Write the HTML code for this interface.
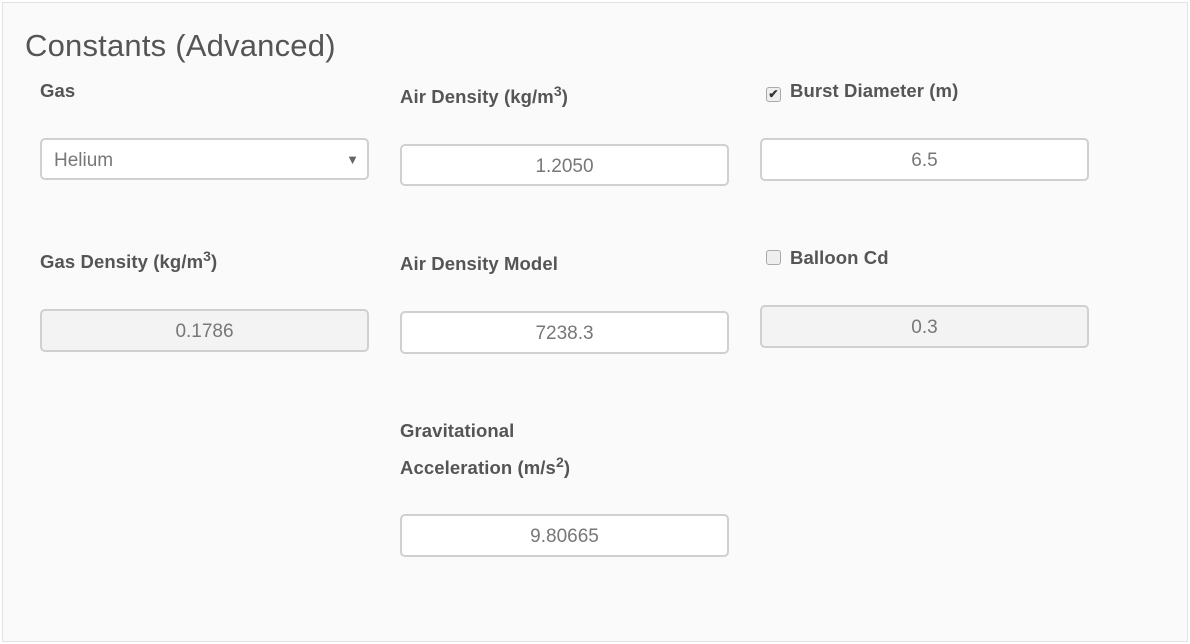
<!DOCTYPE html>
<html><head><style>
body{margin:0;width:1190px;height:644px;background:#fff;font-family:"Liberation Sans",Arial,sans-serif;position:relative;overflow:hidden}
.panel{position:absolute;left:2px;top:2px;width:1184px;height:638px;border:1px solid #e3e3e3;background:#fafafa}
.t{position:absolute;left:25px;top:28px;font-size:31px;color:#555;line-height:36px;letter-spacing:0.2px}
.l{position:absolute;font-weight:bold;font-size:18.5px;color:#555;line-height:22px;white-space:nowrap;letter-spacing:0.1px}
.l sup{font-size:14px;line-height:0}
.b{position:absolute;width:325px;height:38px;border:2px solid #d0d0d0;border-radius:5px;background:#fff;color:#777;font-size:19px;line-height:42px;text-align:center;box-sizing:content-box}
.g{background:#f3f3f3}
.cb{display:inline-block;width:13px;height:13px;border:1px solid #aaa;border-radius:3px;background:#eee;vertical-align:-1px;margin-right:9px;position:relative;font-size:12px;line-height:13px;text-align:center;color:#333}
</style></head><body>
<div class="panel"></div>
<div class="t">Constants (Advanced)</div>
<div class="l" style="left:40px;top:80px">Gas</div>
<div class="b" style="left:40px;top:138px;text-align:left;text-indent:12px">Helium<span style="position:absolute;right:8px;top:-1px;font-size:13px;color:#666">▼</span></div>
<div class="l" style="left:400px;top:86px">Air Density (kg/m<sup>3</sup>)</div>
<div class="b" style="left:400px;top:144px">1.2050</div>
<div class="l" style="left:766px;top:80px"><span class="cb">✔</span>Burst Diameter (m)</div>
<div class="b" style="left:760px;top:138px;height:39px">6.5</div>
<div class="l" style="left:40px;top:251px">Gas Density (kg/m<sup>3</sup>)</div>
<div class="b g" style="left:40px;top:309px;height:39px">0.1786</div>
<div class="l" style="left:400px;top:253px">Air Density Model</div>
<div class="b" style="left:400px;top:311px;height:39px">7238.3</div>
<div class="l" style="left:766px;top:247px"><span class="cb"></span>Balloon Cd</div>
<div class="b g" style="left:760px;top:305px;height:39px">0.3</div>
<div class="l" style="left:400px;top:420px">Gravitational</div>
<div class="l" style="left:400px;top:457px">Acceleration (m/s<sup>2</sup>)</div>
<div class="b" style="left:400px;top:514px;height:39px">9.80665</div>
</body></html>
